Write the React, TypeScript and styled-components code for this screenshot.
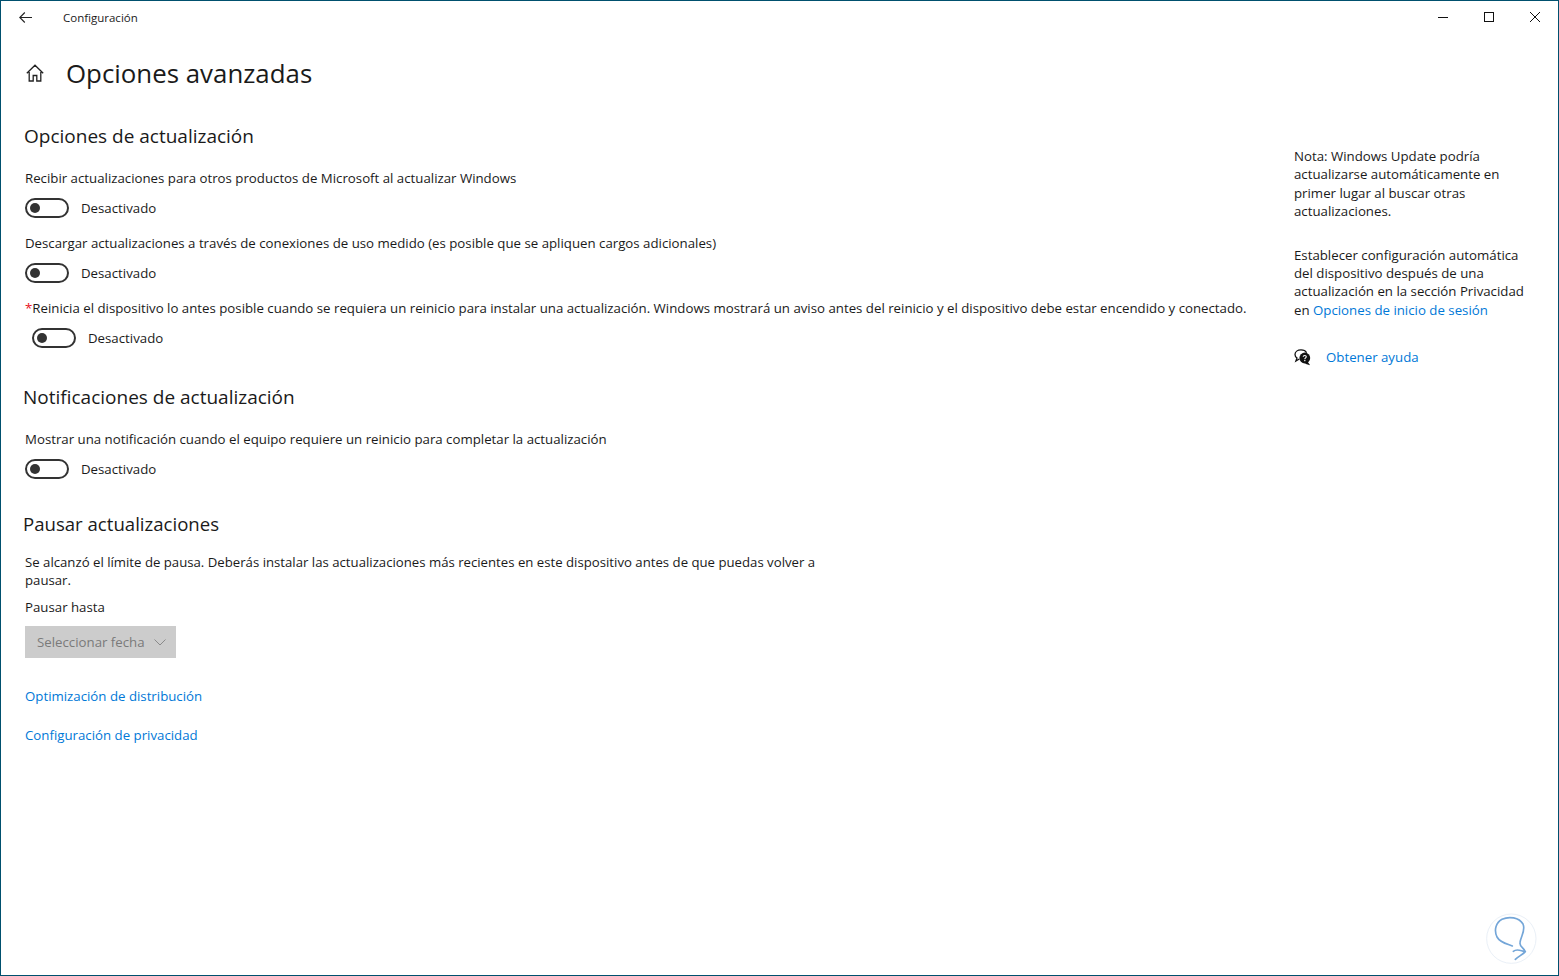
import React from "react";
import styled, { createGlobalStyle } from "styled-components";

const colors = {
  text: "#1a1a1a",
  link: "#0078d7",
  frame: "#00506e",
  toggle: "#333333",
};

const Global = createGlobalStyle`
  html, body { margin: 0; padding: 0; background: #fff; }
  body { font-family: "Open Sans", "Noto Sans", sans-serif; color: ${colors.text}; }
`;

export default function App() {
  return (
    <Frame>
      <Global />
      <TitleBar>
        <BackButton>
          <svg width="13" height="11" viewBox="0 0 13 11" fill="none" stroke="#222" strokeWidth="1.1">
            <path d="M13 5.500H1M5.800.5l-5 5 5 5" />
          </svg>
        </BackButton>
        <AppName>Configuración</AppName>
        <WindowControls>
          <WindowButton>
            <svg width="10" height="10" viewBox="0 0 10 10" fill="none" stroke="#111">
              <path d="M0 5.500h10" />
            </svg>
          </WindowButton>
          <WindowButton>
            <svg width="10" height="10" viewBox="0 0 10 10" fill="none" stroke="#111">
              <rect x=".5" y=".5" width="9" height="9" />
            </svg>
          </WindowButton>
          <WindowButton>
            <svg width="10" height="10" viewBox="0 0 10 10" fill="none" stroke="#111">
              <path d="M0 0l10 10M10 0 0 10" />
            </svg>
          </WindowButton>
        </WindowControls>
      </TitleBar>

      <Body>
        <Main>
          <PageHeader>
            <svg width="18" height="18" viewBox="0 0 18 18" fill="none" stroke="#222" strokeWidth="1.3">
              <path d="M.8 9.200 9 1.200l8.200 8M3.200 6.800V17h4v-5.500h3.600V17h4V6.800" />
            </svg>
            <PageTitle>Opciones avanzadas</PageTitle>
          </PageHeader>

          <SectionTitle $bottom={20}>Opciones de actualización</SectionTitle>
          <Setting label="Recibir actualizaciones para otros productos de Microsoft al actualizar Windows" />
          <Setting label="Descargar actualizaciones a través de conexiones de uso medido (es posible que se apliquen cargos adicionales)" />
          <Setting
            indented
            label={
              <>
                <Star>*</Star>Reinicia el dispositivo lo antes posible cuando se requiera un reinicio para instalar una actualización. Windows mostrará un aviso antes del reinicio y el dispositivo debe estar encendido y conectado.
              </>
            }
          />

          <SectionTitle $top={36} $bottom={20} $left={-2}>Notificaciones de actualización</SectionTitle>
          <Setting label="Mostrar una notificación cuando el equipo requiere un reinicio para completar la actualización" />

          <SectionTitle $top={32} $bottom={16} $left={-2} $size={18.6}>Pausar actualizaciones</SectionTitle>
          <Paragraph>
            Se alcanzó el límite de pausa. Deberás instalar las actualizaciones más recientes en este dispositivo antes de que puedas volver a pausar.
          </Paragraph>
          <FieldLabel>Pausar hasta</FieldLabel>
          <DateSelect>
            Seleccionar fecha
            <svg width="12" height="7" viewBox="0 0 12 7" fill="none" stroke="#8a8a8a">
              <path d="M.5.5 6 6l5.500-5.500" />
            </svg>
          </DateSelect>
          <PageLink $top={29}>Optimización de distribución</PageLink>
          <PageLink $top={21}>Configuración de privacidad</PageLink>
        </Main>

        <Aside>
          <AsideText>
            Nota: Windows Update podría
            <br />
            actualizarse automáticamente en
            <br />
            primer lugar al buscar otras
            <br />
            actualizaciones.
          </AsideText>
          <AsideText>
            Establecer configuración automática
            <br />
            del dispositivo después de una
            <br />
            actualización en la sección Privacidad
            <br />
            en <InlineLink>Opciones de inicio de sesión</InlineLink>
          </AsideText>
          <HelpRow>
            <svg width="18" height="17" viewBox="0 0 18 17">
              <path d="M7 .9C3.600.9 1 2.900 1 5.500c0 1.500.8 2.700 2 3.500l-1.100 3 3.400-2" fill="#fff" stroke="#111" strokeWidth="1.300" />
              <path d="M7 .9c2.500 0 4.700 1.100 5.600 2.800" fill="none" stroke="#111" strokeWidth="1.300" />
              <circle cx="10.800" cy="9" r="5.400" fill="#111" />
              <path d="M13.500 12.500l2.600 3.800-5-1.600z" fill="#111" />
              <path d="M9.200 7.800c0-1.800 3.100-1.800 3.100 0 0 1.200-1.500 1.100-1.500 2.500" fill="none" stroke="#fff" strokeWidth="1.100" />
              <rect x="10.200" y="11" width="1.200" height="1.200" fill="#fff" />
            </svg>
            <InlineLink>Obtener ayuda</InlineLink>
          </HelpRow>
        </Aside>
      </Body>

      <Watermark>
        <svg width="55" height="55" viewBox="70 65 165 165" fill="none">
          <circle cx="152" cy="148" r="74" fill="#fff" stroke="#eaf0f7" strokeWidth="3" />
          <path
            d="M155 170C140 164 118 160 109 143 99 122 106 100 124 90 145 80 175 84 187 104 196 124 180 140 178 160 176 172 190 176 194 187 186 196 172 202 164 210M158 186C170 176 182 186 194 187"
            stroke="#74a6d8"
            strokeWidth="5"
            strokeLinecap="round"
          />
        </svg>
      </Watermark>
    </Frame>
  );
}

const Setting = ({ label, indented }: { label: React.ReactNode; indented?: boolean }) => (
  <SettingBlock>
    <SettingLabel>{label}</SettingLabel>
    <ToggleRow $indented={indented}>
      <ToggleTrack>
        <ToggleKnob />
      </ToggleTrack>
      <ToggleText>Desactivado</ToggleText>
    </ToggleRow>
  </SettingBlock>
);

const Frame = styled.div`
  position: relative;
  box-sizing: border-box;
  width: 1559px;
  height: 976px;
  border: 1px solid ${colors.frame};
  background: #fff;
  display: flex;
  flex-direction: column;
  overflow: hidden;
  font-size: 13.25px;
`;

const TitleBar = styled.header`
  display: flex;
  align-items: center;
  height: 32px;
  flex: none;
`;

const BackButton = styled.div`
  display: flex;
  margin-left: 18px;
  width: 44px;
`;

const AppName = styled.span`
  font-size: 11.5px;
`;

const WindowControls = styled.div`
  display: flex;
  margin-left: auto;
`;

const WindowButton = styled.div`
  width: 46px;
  height: 32px;
  display: flex;
  align-items: center;
  justify-content: center;
`;

const Body = styled.div`
  display: flex;
  flex: 1;
`;

const Main = styled.main`
  flex: 1;
  padding-left: 24px;
`;

const PageHeader = styled.div`
  display: flex;
  align-items: center;
  gap: 22px;
  height: 40px;
  margin: 20px 0 30px 1px;
`;

const PageTitle = styled.h1`
  margin: 0;
  font-size: 25.85px;
  font-weight: 400;
  line-height: 40px;
`;

const SectionTitle = styled.h2<{ $top?: number; $bottom: number; $left?: number; $size?: number }>`
  margin: ${(p) => p.$top ?? 0}px 0 ${(p) => p.$bottom}px ${(p) => p.$left ?? -1}px;
  font-size: ${(p) => p.$size ?? 19}px;
  font-weight: 400;
  line-height: 26px;
`;

const SettingBlock = styled.div`
  margin-bottom: 16px;
`;

const SettingLabel = styled.div`
  line-height: 18px;
  height: 18px;
  margin-bottom: 11px;
  white-space: nowrap;
`;

const Star = styled.span`
  color: #e81123;
`;

const ToggleRow = styled.div<{ $indented?: boolean }>`
  display: flex;
  align-items: center;
  height: 20px;
  margin-left: ${(p) => (p.$indented ? 7 : 0)}px;
`;

const ToggleTrack = styled.div`
  box-sizing: border-box;
  width: 44px;
  height: 20px;
  border: 2px solid ${colors.toggle};
  border-radius: 10px;
  display: flex;
  align-items: center;
  padding-left: 3px;
  margin-right: 12px;
`;

const ToggleKnob = styled.div`
  width: 10px;
  height: 10px;
  border-radius: 50%;
  background: ${colors.toggle};
`;

const ToggleText = styled.span`
  line-height: 20px;
`;

const Paragraph = styled.p`
  margin: 0 0 9px;
  width: 800px;
  line-height: 18px;
  font-size: 13.2px;
`;

const FieldLabel = styled.div`
  line-height: 18px;
  margin-bottom: 10px;
`;

const DateSelect = styled.div`
  box-sizing: border-box;
  width: 151px;
  height: 32px;
  background: #cccccc;
  color: #7a7a7a;
  display: flex;
  align-items: center;
  justify-content: space-between;
  padding: 0 10px 0 12px;
`;

const PageLink = styled.a<{ $top: number }>`
  display: block;
  margin-top: ${(p) => p.$top}px;
  line-height: 18px;
  color: ${colors.link};
`;

const Aside = styled.aside`
  width: 264px;
  flex: none;
  padding-top: 114px;
`;

const AsideText = styled.p`
  margin: 0 0 25px;
  line-height: 18.4px;
  white-space: nowrap;
`;

const InlineLink = styled.a`
  color: ${colors.link};
`;

const HelpRow = styled.div`
  display: flex;
  align-items: center;
  gap: 14px;
  margin-top: 29px;
`;

const Watermark = styled.div`
  position: absolute;
  right: 19px;
  bottom: 9px;
  line-height: 0;
`;
